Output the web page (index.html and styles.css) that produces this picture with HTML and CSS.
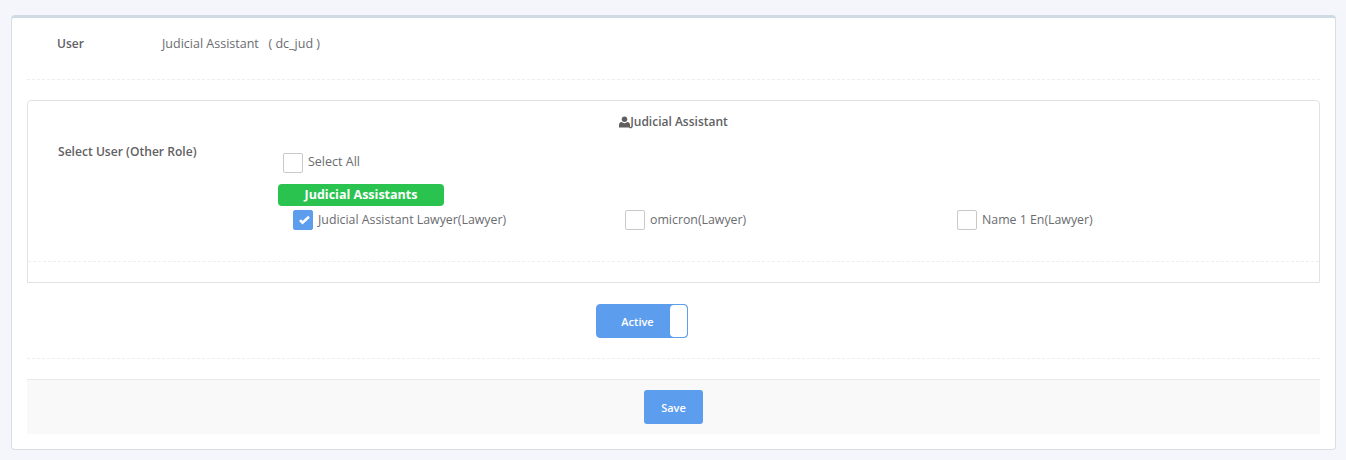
FILE: index.html
```html
<!DOCTYPE html>
<html lang="en">
<head>
<meta charset="utf-8">
<title>User</title>
<link rel="stylesheet" href="styles.css">
</head>
<body>
<main class="card">
  <section class="user-row">
    <div class="user-label">User</div>
    <div class="user-value">Judicial Assistant &nbsp; ( dc_jud )</div>
  </section>
  <hr class="dash first-dash">
  <section class="box">
    <h2 class="box-title"><svg class="user-icon" viewBox="0 0 12 12"><circle cx="6" cy="3" r="3"/><path d="M0 12V9.2C0 7.400 1.200 6.300 2.800 6.100 3.800 6.900 4.900 7.300 6 7.300s2.200-.4 3.200-1.200C10.800 6.300 12 7.400 12 9.200V12z"/></svg>Judicial Assistant</h2>
    <div class="box-body">
      <div class="select-label">Select User (Other Role)</div>
      <div class="select-list">
        <label class="check-row all-row"><span class="check"></span><span>Select All</span></label>
        <div class="group-badge">Judicial Assistants</div>
        <div class="members">
          <label class="check-row"><span class="check checked"><svg viewBox="0 0 14 14"><path d="M4 7.200l2.500 2.500L13 3.800"/></svg></span><span class="member-name">Judicial Assistant Lawyer(Lawyer)</span></label>
          <label class="check-row"><span class="check"></span><span class="member-name">omicron(Lawyer)</span></label>
          <label class="check-row"><span class="check"></span><span class="member-name">Name 1 En(Lawyer)</span></label>
        </div>
      </div>
    </div>
    <hr class="dash box-dash">
  </section>
  <div class="toggle-row">
    <div class="toggle"><span class="toggle-text">Active</span><span class="toggle-handle"></span></div>
  </div>
  <hr class="dash">
  <footer class="actions"><button class="save" type="button">Save</button></footer>
</main>
</body>
</html>
```
FILE: styles.css
```css
* { box-sizing: border-box; }
html, body { margin: 0; height: 460px; overflow: hidden; }
body {
  background: #f4f6fb;
  padding: 15px 10px 0 11px;
  font-family: "Open Sans", "Noto Sans", sans-serif;
  font-size: 12px;
  color: #6a6c6f;
}
.card {
  height: 435px;
  background: #fff;
  border: 1px solid #d8dfe3;
  border-top: 3px solid #cfdbe2;
  border-radius: 4px;
  padding: 0 15px;
}
.user-row { display: flex; height: 61px; padding-top: 17px; line-height: 18px; }
.user-label { width: 105px; margin-left: 30px; font-weight: 600; color: #5f6164; }
.user-value { color: #6a6c6f; font-size: 12.5px; }
.dash { margin: 0; height: 0; border: 0; border-top: 1px dashed #eceef0; }
.first-dash { margin-bottom: 20px; }
.box {
  height: 183px;
  border: 1px solid #dfe3e5;
  border-radius: 4px 4px 0 0;
  display: flex;
  flex-direction: column;
}
.box-title {
  margin: 12px 0 0;
  height: 18px;
  font-size: 12px;
  line-height: 18px;
  font-weight: 600;
  text-align: center;
  color: #5f6164;
}
.user-icon { width: 11px; height: 12px; fill: #5f5f5f; vertical-align: -2px; }
.box-body { display: flex; height: 130px; padding-top: 9px; }
.select-label { width: 220px; margin: 3px 0 0 30px; font-size: 12.1px; line-height: 18px; font-weight: 600; color: #5f6164; }
.select-list { flex: 1; font-size: 12.5px; }
.check-row { display: flex; align-items: flex-start; gap: 5px; line-height: 18px; }
.member-name { font-size: 12.35px; line-height: 20px; }
.check {
  flex: none;
  width: 20px;
  height: 20px;
  background: #fff;
  border: 1px solid #c9c9c9;
  border-radius: 2px;
}
.check.checked { background: #5c9ded; border-color: #5c9ded; padding: 2px; }
.check svg { display: block; width: 14px; height: 14px; fill: none; stroke: #fff; stroke-width: 2.6; }
.all-row { margin: 13px 0 0 5px; }
.group-badge {
  width: 166px;
  height: 22px;
  margin-top: 11px;
  background: #2ac34f;
  border-radius: 4px;
  color: #fff;
  font-weight: 700;
  line-height: 21px;
  text-align: center;
}
.members { display: grid; grid-template-columns: repeat(3, 332px); margin: 4px 0 0 15px; }
.box-dash { margin-top: 0; }
.toggle-row { display: flex; justify-content: center; height: 75px; padding: 21px 64px 0 0; }
.toggle {
  display: flex;
  width: 92px;
  height: 34px;
  background: #5c9ded;
  border: 1px solid #5c9ded;
  border-radius: 4px;
  color: #fff;
  font-size: 11px;
  font-weight: 600;
}
.toggle-text { flex: 1; text-align: center; padding-left: 9px; line-height: 34px; }
.toggle-handle { width: 17px; background: #fff; border-radius: 4px; }
.actions {
  height: 55px;
  margin-top: 20px;
  padding-top: 10px;
  background: #f9f9f9;
  border-top: 1px solid #e7e9ea;
  display: flex;
  justify-content: center;
}
.save {
  width: 59px;
  height: 34px;
  padding: 0;
  background: #5c9ded;
  border: 0;
  border-radius: 3px;
  color: #fff;
  font: 600 11px "Open Sans", "Noto Sans", sans-serif;
}
```
